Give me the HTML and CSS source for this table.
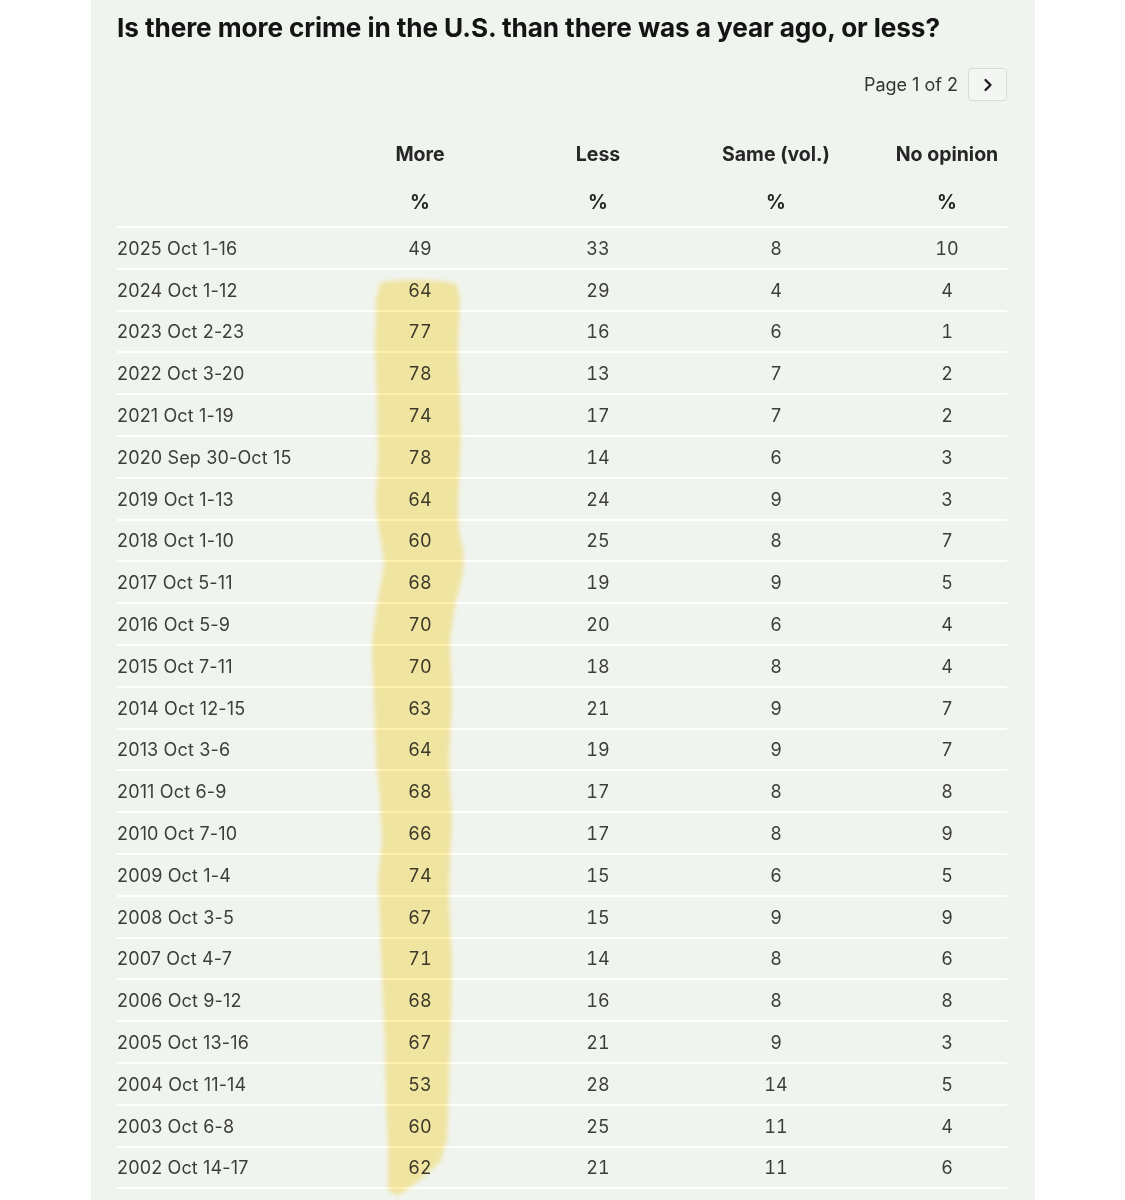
FILE: index.html
```html
<!DOCTYPE html>
<html lang="en">
<head>
<meta charset="utf-8">
<title>Crime poll</title>
<link rel="stylesheet" href="styles.css">
</head>
<body>
<div class="panel">
  <h1 class="title">Is there more crime in the U.S. than there was a year ago, or less?</h1>
  <div class="pager">
    <span class="pager-label">Page 1 of 2</span>
    <button class="pager-btn" aria-label="Next page">
      <svg width="14" height="14" viewBox="0 0 14 14"><path d="M4.5 2 L9.5 7 L4.5 12" fill="none" stroke="#1c1c1c" stroke-width="2.3" stroke-linecap="round" stroke-linejoin="round"/></svg>
    </button>
  </div>
  <div class="table">
    <div class="row head">
      <div class="cell date"></div>
      <div class="cell">More</div>
      <div class="cell">Less</div>
      <div class="cell">Same (vol.)</div>
      <div class="cell">No opinion</div>
    </div>
    <div class="row head pct">
      <div class="cell date"></div>
      <div class="cell">%</div>
      <div class="cell">%</div>
      <div class="cell">%</div>
      <div class="cell">%</div>
    </div>
    <div class="row"><div class="cell date">2025 Oct 1-16</div><div class="cell">49</div><div class="cell">33</div><div class="cell">8</div><div class="cell">10</div></div>
    <div class="row"><div class="cell date">2024 Oct 1-12</div><div class="cell">64</div><div class="cell">29</div><div class="cell">4</div><div class="cell">4</div></div>
    <div class="row"><div class="cell date">2023 Oct 2-23</div><div class="cell">77</div><div class="cell">16</div><div class="cell">6</div><div class="cell">1</div></div>
    <div class="row"><div class="cell date">2022 Oct 3-20</div><div class="cell">78</div><div class="cell">13</div><div class="cell">7</div><div class="cell">2</div></div>
    <div class="row"><div class="cell date">2021 Oct 1-19</div><div class="cell">74</div><div class="cell">17</div><div class="cell">7</div><div class="cell">2</div></div>
    <div class="row"><div class="cell date">2020 Sep 30-Oct 15</div><div class="cell">78</div><div class="cell">14</div><div class="cell">6</div><div class="cell">3</div></div>
    <div class="row"><div class="cell date">2019 Oct 1-13</div><div class="cell">64</div><div class="cell">24</div><div class="cell">9</div><div class="cell">3</div></div>
    <div class="row"><div class="cell date">2018 Oct 1-10</div><div class="cell">60</div><div class="cell">25</div><div class="cell">8</div><div class="cell">7</div></div>
    <div class="row"><div class="cell date">2017 Oct 5-11</div><div class="cell">68</div><div class="cell">19</div><div class="cell">9</div><div class="cell">5</div></div>
    <div class="row"><div class="cell date">2016 Oct 5-9</div><div class="cell">70</div><div class="cell">20</div><div class="cell">6</div><div class="cell">4</div></div>
    <div class="row"><div class="cell date">2015 Oct 7-11</div><div class="cell">70</div><div class="cell">18</div><div class="cell">8</div><div class="cell">4</div></div>
    <div class="row"><div class="cell date">2014 Oct 12-15</div><div class="cell">63</div><div class="cell">21</div><div class="cell">9</div><div class="cell">7</div></div>
    <div class="row"><div class="cell date">2013 Oct 3-6</div><div class="cell">64</div><div class="cell">19</div><div class="cell">9</div><div class="cell">7</div></div>
    <div class="row"><div class="cell date">2011 Oct 6-9</div><div class="cell">68</div><div class="cell">17</div><div class="cell">8</div><div class="cell">8</div></div>
    <div class="row"><div class="cell date">2010 Oct 7-10</div><div class="cell">66</div><div class="cell">17</div><div class="cell">8</div><div class="cell">9</div></div>
    <div class="row"><div class="cell date">2009 Oct 1-4</div><div class="cell">74</div><div class="cell">15</div><div class="cell">6</div><div class="cell">5</div></div>
    <div class="row"><div class="cell date">2008 Oct 3-5</div><div class="cell">67</div><div class="cell">15</div><div class="cell">9</div><div class="cell">9</div></div>
    <div class="row"><div class="cell date">2007 Oct 4-7</div><div class="cell">71</div><div class="cell">14</div><div class="cell">8</div><div class="cell">6</div></div>
    <div class="row"><div class="cell date">2006 Oct 9-12</div><div class="cell">68</div><div class="cell">16</div><div class="cell">8</div><div class="cell">8</div></div>
    <div class="row"><div class="cell date">2005 Oct 13-16</div><div class="cell">67</div><div class="cell">21</div><div class="cell">9</div><div class="cell">3</div></div>
    <div class="row"><div class="cell date">2004 Oct 11-14</div><div class="cell">53</div><div class="cell">28</div><div class="cell">14</div><div class="cell">5</div></div>
    <div class="row"><div class="cell date">2003 Oct 6-8</div><div class="cell">60</div><div class="cell">25</div><div class="cell">11</div><div class="cell">4</div></div>
    <div class="row"><div class="cell date">2002 Oct 14-17</div><div class="cell">62</div><div class="cell">21</div><div class="cell">11</div><div class="cell">6</div></div>
  </div>
  <svg class="marker" viewBox="91 0 944 1200" width="944" height="1200" aria-hidden="true">
    <defs><filter id="soft" x="-10%" y="-2%" width="120%" height="104%"><feGaussianBlur stdDeviation="2"/></filter></defs>
    <path filter="url(#soft)" fill="#ffefad" d="M380 283 C400 278 440 279 456 284 L460 296 L458 350 L461 440 L459 480 C458 510 457 525 462 545 C466 565 462 580 456 600 L450 640 L452 700 L449 760 L452 820 L450 860 L449 900 L452 960 L451 1020 L449 1080 L447 1140 L440 1162 L420 1180 L398 1196 L388 1190 L388 1150 L386 1100 L385 1040 L382 980 L380 920 L378 880 L382 840 L380 800 L376 760 L374 700 L372 650 C373 620 380 590 384 565 C382 540 376 520 376 500 L378 460 L377 400 L375 350 L376 300 Z"/>
  </svg>
</div>
</body>
</html>
```
FILE: styles.css
```css
html, body {
  margin: 0;
  padding: 0;
  background: #ffffff;
}
body {
  font-family: Inter, "Liberation Sans", sans-serif;
  color: #333;
}
.panel {
  position: relative;
  margin-left: 91px;
  width: 944px;
  min-height: 1200px;
  box-sizing: border-box;
  background: #f0f4ee;
  padding: 12px 28px 0 26px;
}
.title {
  margin: 0;
  font-size: 26.2px;
  line-height: 32px;
  font-weight: 700;
  color: #141414;
  letter-spacing: -0.1px;
}
.pager {
  display: flex;
  justify-content: flex-end;
  align-items: center;
  gap: 10px;
  margin-top: 24px;
  height: 33px;
}
.pager-label {
  font-size: 18px;
  color: #333;
}
.pager-btn {
  width: 39px;
  height: 33px;
  box-sizing: border-box;
  border: 1px solid #d9ddd7;
  border-radius: 4px;
  background: #f3f6f2;
  display: flex;
  align-items: center;
  justify-content: center;
  padding: 0;
}
.table {
  margin-top: 28px;
  width: 890px;
}
.row {
  display: grid;
  grid-template-columns: 192px 222px 134px 222px 120px;
  height: 39.8px;
  align-items: center;
  border-bottom: 2px solid #ffffff;
  font-size: 18px;
  color: #3d3d3d;
  font-variant-numeric: tabular-nums;
}
.row.head {
  height: 48px;
  border-bottom: none;
  font-size: 19.5px;
  font-weight: 700;
  color: #262626;
  font-variant-numeric: normal;
}
.row.head.pct {
  height: 49px;
  border-bottom: 2px solid #ffffff;
}
.cell {
  text-align: center;
  white-space: nowrap;
  padding-top: 1px;
}
.cell.date {
  text-align: left;
  font-variant-numeric: normal;
  letter-spacing: 0.15px;
}
.marker {
  position: absolute;
  left: 0;
  top: 0;
  pointer-events: none;
  mix-blend-mode: multiply;
}
```
